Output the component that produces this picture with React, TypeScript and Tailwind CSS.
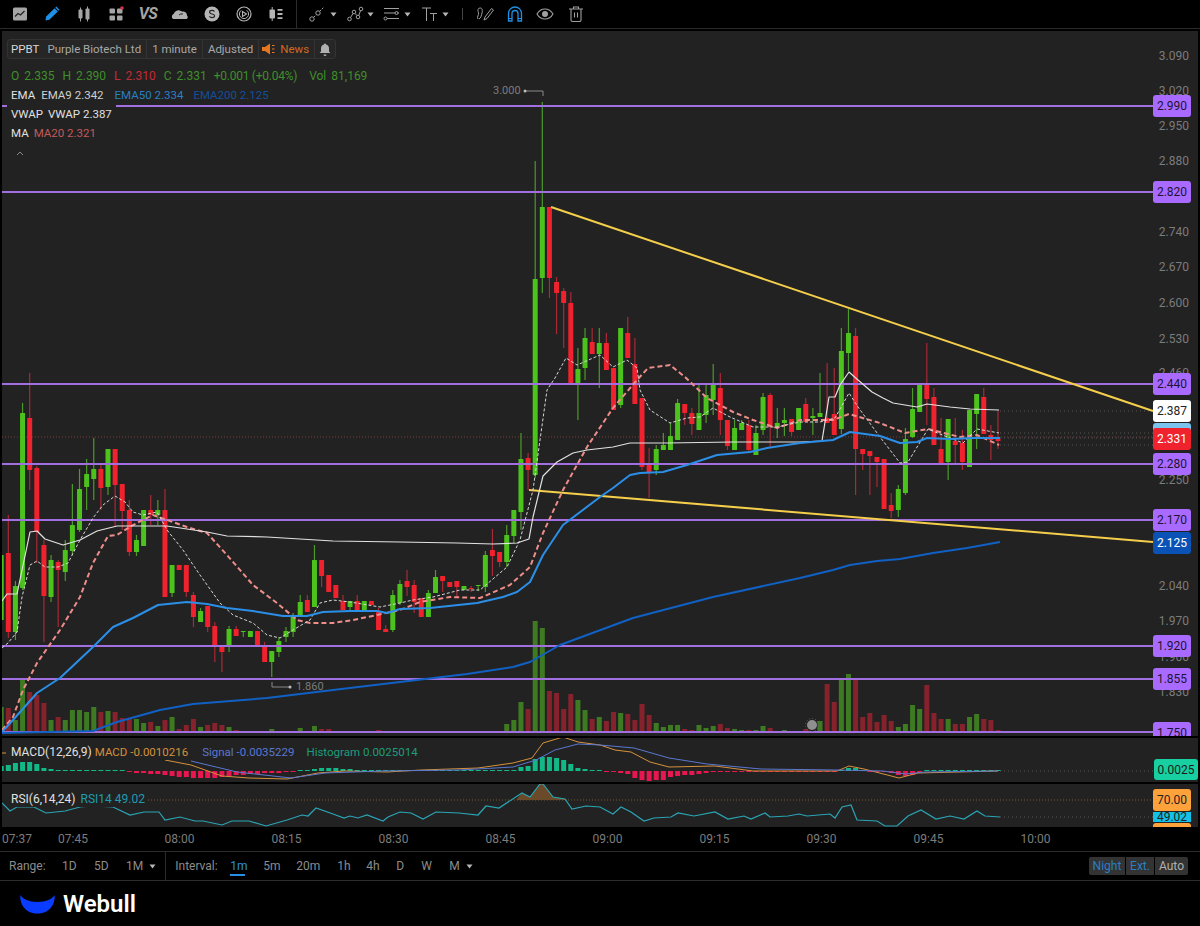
import React from "react";

// [up, bodyTop, bodyBottom, high, low] in page pixels, index 0 is the cut off candle at the left edge
type Candle = [number, number, number, number, number];

const candles: Candle[] = [
  [1,555,620,548,630],[0,553,632,515,638],[1,586,632,581,640],[1,413,588,403,590],[0,418,470,373,490],
  [0,468,532,466,563],[0,545,596,540,642],[1,560,597,555,602],[0,562,570,560,627],[1,550,572,540,581],
  [1,525,551,484,555],[1,489,530,469,532],[1,474,487,459,510],[1,469,479,438,500],[0,469,488,465,510],
  [1,449,487,449,495],[0,449,485,449,527],[0,484,511,484,530],[0,510,552,500,556],[1,540,552,535,556],
  [1,510,546,510,546],[0,510,515,495,525],[1,510,515,500,525],[0,510,597,489,597],[1,565,593,565,597],
  [0,565,570,565,570],[0,565,592,565,597],[0,595,617,592,627],[1,611,622,608,622],[0,606,627,606,632],
  [0,626,647,622,662],[0,647,652,647,672],[1,629,646,626,652],[0,629,636,626,636],[1,631,632,631,637],
  [1,631,637,631,637],[0,631,645,631,645],[0,646,662,642,662],[1,651,662,651,677],[1,641,652,637,657],
  [1,631,637,627,642],[1,617,632,613,637],[1,602,616,595,616],[0,600,612,595,612],[1,560,607,545,607],
  [0,560,576,560,587],[0,575,592,575,592],[0,585,598,585,598],[0,601,610,595,610],[1,601,607,601,610],
  [0,601,610,595,610],[1,601,610,601,610],[0,601,605,601,605],[0,612,630,608,630],[0,629,632,625,632],
  [1,595,630,590,632],[1,584,603,580,605],[0,581,587,570,596],[0,585,602,580,613],[0,598,617,598,617],
  [1,593,617,590,617],[1,577,593,570,593],[0,576,581,576,592],[0,582,587,582,587],[0,581,587,581,597],
  [1,586,590,586,590],[0,588,589,586,592],[1,585,586,585,591],[1,555,587,551,592],[0,550,556,529,576],
  [0,552,562,552,567],[1,535,562,525,567],[1,510,536,510,543],[1,459,512,433,530],[0,458,470,453,490],
  [1,279,475,161,478],[1,207,278,102,293],[0,207,278,207,298],[0,282,293,277,334],[0,291,303,288,348],
  [0,303,383,292,383],[1,369,383,348,420],[1,338,368,328,380],[0,342,354,328,354],[1,343,354,328,388],
  [0,343,370,333,370],[0,368,410,368,410],[1,328,405,328,408],[0,333,358,317,358],[0,364,404,338,404],
  [0,398,467,398,470],[0,465,472,448,498],[1,449,470,445,475],[1,445,450,433,450],[1,436,450,423,450],
  [1,403,440,399,440],[0,404,413,404,425],[0,413,424,408,435],[1,413,430,385,430],[1,395,415,385,423],
  [1,385,400,364,415],[0,388,420,373,435],[0,420,446,420,450],[1,428,450,420,450],[1,423,430,420,430],
  [0,425,450,420,453],[1,433,455,425,455],[1,397,430,393,435],[0,395,427,393,447],[1,423,428,408,438],
  [1,420,423,408,436],[0,419,432,419,436],[1,408,430,408,430],[0,404,422,398,422],[1,416,418,408,435],
  [1,413,417,373,417],[0,418,423,363,423],[0,414,435,368,435],[1,351,429,328,434],[1,333,353,309,371],
  [0,336,449,328,495],[0,449,454,449,470],[0,451,456,451,495],[0,457,462,457,487],[0,459,509,459,509],
  [0,505,511,493,518],[1,489,510,485,517],[1,439,493,428,495],[1,409,437,388,438],[1,385,412,385,412],
  [0,385,399,343,425],[0,397,445,388,445],[0,449,463,418,463],[1,419,462,419,480],[0,441,445,418,463],
  [0,443,462,430,470],[1,410,467,410,467],[1,394,414,394,449],[0,397,434,388,434],[0,435,440,425,460],
  [0,439,441,410,449],
];

// one height per candle, split into the three stretches of the session
const earlyVolumes = [25,24,12,52,40,37,29,12,15,12,22,22,20,25,20,21,20,14,13,13,9,10,6,12,15,3,7,13,5,7,9,7,5];
const quietVolumes = [2,1,1,1,1,3,1,1,1,4,1,6,3,3,1,1,1,1,1,1,2,1,1,1,1,1,1,1,1,1,1,1,1,1,1,1,1,1];
const lateVolumes = [
  8,12,30,23,111,104,41,39,23,38,32,22,13,15,11,20,19,18,12,28,17,9,5,7,7,3,2,7,4,6,8,4,3,2,2,2,6,4,1,2,1,1,3,1,
  11,48,30,52,58,52,15,19,10,17,11,5,8,27,23,47,19,13,13,8,8,15,18,13,12,2,
];
const volumes = [...earlyVolumes, ...quietVolumes, ...lateVolumes];

const histogram = [
  5,6,8,9,9,7,3,2,1,1,1,1,1,1,1,1,1,1,-1,-2,-2,-3,-3,-4,-5,-6,-6,-7,-7,-7,-7,-6,-5,-4,-4,-3,-3,-2,-2,-2,-1,-1,
  1,1,2,3,3,3,2,2,1,1,1,1,1,1,1,1,1,1,1,1,1,1,1,1,1,1,1,1,1,1,1,4,5,12,14,14,13,11,7,3,2,1,1,
  -1,-1,-2,-3,-7,-9,-10,-9,-9,-6,-5,-4,-4,-3,-2,-1,-1,-1,-1,-1,-1,-1,-1,-1,-1,-1,-1,-1,-1,-1,-1,-1,-1,
  1,3,3,1,-1,-1,-1,-2,-4,-5,-4,-2,1,1,1,1,1,1,1,1,1,1,1,
];

const candleX = (i: number) => 1.2 + i * 7.12;

const vwap = "2,601 7,594 17,594 30,532 37,531 45,539 63,545 80,540 97,531 117,526 167,526 207,532 227,536 267,537 300,539 333,541 400,542 457,543 493,544 517,543 529,539 533,517 543,476 557,462 573,453 587,450 613,447 630,443 667,443 733,442 800,442 822,441 829,397 835,397 840,385 849,372 858,380 872,392 883,398 893,403 917,407 927,404 950,407 970,409 999,410";
const ema9 = "2,648 8,643 17,632 22,597 30,565 37,561 45,567 58,567 68,563 80,540 93,518 103,505 115,496 125,502 133,512 143,515 157,512 167,530 183,550 200,575 220,603 233,615 253,623 267,635 280,638 293,630 310,620 320,603 333,600 350,602 380,607 400,603 413,600 433,597 460,590 480,590 507,567 520,540 533,490 547,390 555,378 566,358 577,365 600,355 613,367 627,360 637,368 640,390 650,410 670,423 687,418 700,417 713,408 730,417 753,427 777,427 800,422 820,422 835,418 849,393 858,407 880,437 900,463 908,462 928,429 940,434 963,443 977,429 999,433";
const ma20 = "2,730 13,717 23,690 37,663 60,630 80,597 93,563 108,536 117,535 133,525 153,515 167,520 187,527 207,533 227,555 253,585 277,603 297,620 310,623 333,623 353,620 377,615 400,610 420,602 450,597 480,598 510,585 530,567 543,533 563,490 587,447 613,408 637,380 648,368 670,365 685,377 707,398 733,412 753,420 777,428 800,420 833,420 849,414 880,423 905,433 928,429 960,437 977,435 999,445";
const ema50 = "2,732 13,720 37,693 60,678 93,647 113,627 133,618 158,605 187,602 207,604 227,608 253,611 283,616 307,616 323,612 350,611 377,611 387,613 400,609 430,608 477,603 503,597 517,592 530,582 543,555 563,525 600,497 613,488 630,475 640,473 663,472 687,465 717,455 750,452 767,448 800,443 833,440 850,432 880,436 900,443 917,442 927,438 950,439 973,438 1000,438";
const ema200 = "2,733 93,731 117,722 160,710 193,704 267,698 333,690 400,682 467,674 513,667 530,662 560,645 633,618 713,597 800,578 833,570 850,565 877,561 900,559 933,553 967,548 1000,542";
const macdOrange = "165,760 191,765 222,776 249,778 287,779 318,773 344,771 387,772 421,770 478,768 513,763 532,758 543,743 563,737 578,742 600,745 615,750 631,752 650,762 669,767 715,766 753,771 837,771 849,766 864,769 899,778 918,773 998,771";
const macdBlue = "191,761 237,772 291,778 325,773 383,771 459,770 513,767 536,760 555,750 578,744 600,745 634,748 669,758 707,764 761,769 837,770 883,771 906,774 925,772 998,771";
const rsi = "2,803 10,811 17,807 34,807 46,813 65,811 80,807 92,806 113,807 130,815 144,812 159,812 165,820 180,817 195,821 203,821 222,825 232,821 249,821 266,826 287,820 302,815 308,816 316,808 333,814 344,818 350,816 358,818 367,815 383,821 388,817 400,812 411,813 423,819 436,812 459,813 478,815 486,806 499,808 522,793 530,797 540,784 543,784 553,797 565,799 572,809 586,806 600,807 613,814 621,807 631,812 644,821 654,818 671,817 678,813 694,816 715,812 728,819 744,816 751,819 765,813 770,817 788,816 799,814 807,816 830,814 835,818 842,807 851,805 857,820 877,821 885,826 897,826 908,816 921,810 936,819 950,816 964,819 977,811 985,816 1000,817";

const priceLabels: [string, number][] = [
  ["3.090", 56], ["3.020", 91], ["2.950", 126], ["2.880", 161], ["2.740", 232], ["2.670", 267],
  ["2.600", 303], ["2.530", 339], ["2.460", 373], ["2.250", 480], ["2.040", 586], ["1.970", 621],
  ["1.900", 657], ["1.830", 692],
];

const levels: [string, number][] = [
  ["2.990", 106], ["2.820", 192], ["2.440", 384], ["2.280", 464], ["2.170", 520], ["1.920", 646], ["1.855", 679], ["1.750", 732],
];

const times = ["08:00", "08:15", "08:30", "08:45", "09:00", "09:15", "09:30", "09:45", "10:00"];

function Caret() {
  return (
    <svg width="7" height="5" viewBox="0 0 7 5" className="shrink-0">
      <path d="M0.5 0.5h6L3.5 4.5z" fill="#b5b5b5" />
    </svg>
  );
}

function ToolIcon({ children, className }: { children: React.ReactNode; className?: string }) {
  return (
    <svg width="18" height="18" viewBox="0 0 18 18" fill="none" className={className}>
      {children}
    </svg>
  );
}

const leftTools = [
  <ToolIcon key="chart">
    <rect x="2" y="2.5" width="14" height="13" rx="1.5" fill="#a5a5a5" />
    <path d="M4 11.5l3-3 2.5 1.5 4-4" stroke="#222" strokeWidth="1.3" />
  </ToolIcon>,
  <ToolIcon key="pencil">
    <path d="M3.2 11.6L11.6 3.2l3.2 3.2-8.4 8.4-4 .8z" fill="#1e90e6" />
    <path d="M12.8 2l3.2 3.2" stroke="#1e90e6" strokeWidth="1.6" />
  </ToolIcon>,
  <ToolIcon key="candles">
    <rect x="3.5" y="4.5" width="4" height="9" rx="1" fill="#a5a5a5" />
    <rect x="10.5" y="3.5" width="4" height="11" rx="1" fill="#a5a5a5" />
    <path d="M5.5 2.5v14M12.5 1.5v15" stroke="#a5a5a5" strokeWidth="1" />
  </ToolIcon>,
  <ToolIcon key="grid">
    <rect x="2.5" y="3.5" width="5.5" height="5" rx="1" fill="#a5a5a5" />
    <rect x="10" y="3.5" width="5.5" height="5" rx="1" fill="#a5a5a5" />
    <rect x="2.5" y="10.5" width="5.5" height="5" rx="1" fill="#a5a5a5" />
    <rect x="10" y="10.5" width="5.5" height="5" rx="1" fill="#a5a5a5" />
    <circle cx="15" cy="3" r="1.8" fill="#d8324a" />
  </ToolIcon>,
  <span key="vs" className="text-[16px] font-bold italic leading-none tracking-[-0.5px] text-[#a5a5a5]">VS</span>,
  <ToolIcon key="cloud">
    <path d="M2 14a3 3 0 0 1 .8-5.2A5 5 0 0 1 11 6.6 3.8 3.8 0 0 1 16 10.4 2.4 2.4 0 0 1 15.5 14z" fill="#b0b0b0" />
    <path d="M8 10a4 4 0 0 1 4-1" stroke="#222" strokeWidth="1" />
  </ToolIcon>,
  <ToolIcon key="coin">
    <circle cx="9" cy="9" r="7.5" fill="#b5b5b5" />
    <path d="M11.5 6.5C10.8 5.6 9.8 5.4 9 5.4c-1.4 0-2.4.8-2.4 1.8 0 2.4 5 1.2 5 3.6 0 1-1 1.8-2.6 1.8-1 0-2-.4-2.6-1.2" stroke="#222" strokeWidth="1.2" />
  </ToolIcon>,
  <ToolIcon key="play">
    <circle cx="9" cy="9" r="7" stroke="#b5b5b5" strokeWidth="1.2" />
    <circle cx="9" cy="9" r="4.6" stroke="#b5b5b5" strokeWidth="1" strokeDasharray="18 6" />
    <path d="M7.5 6.5l4 2.5-4 2.5z" stroke="#b5b5b5" strokeWidth="1.1" />
  </ToolIcon>,
  <ToolIcon key="bars">
    <rect x="2.5" y="4.5" width="5.5" height="9" rx="1" fill="#b5b5b5" />
    <path d="M5.2 2v14" stroke="#b5b5b5" />
    <path d="M10.5 4.8h5M10.5 9h5M10.5 13.2h5" stroke="#b5b5b5" strokeWidth="1.8" />
  </ToolIcon>,
];

function Toolbar() {
  return (
    <div className="flex h-[28px] items-center pl-[4px] text-[#b5b5b5]">
      {leftTools.map((icon, i) => (
        <div key={i} className="flex w-[32px] items-center justify-center">
          {icon}
        </div>
      ))}
      <div className="ml-[4px] h-[28px] w-px bg-[#2c2c2c]" />
      <div className="ml-[11px] flex items-center gap-[4px]">
        <ToolIcon>
          <circle cx="4" cy="14" r="2.200" stroke="#a0a0a0" />
          <circle cx="10" cy="8" r="2.200" stroke="#a0a0a0" />
          <path d="M5.600 12.400l2.800-2.800M11.600 6.400L16 2" stroke="#a0a0a0" strokeDasharray="2 1" />
        </ToolIcon>
        <Caret />
      </div>
      <div className="ml-[9px] flex items-center gap-[3px]">
        <ToolIcon>
          <circle cx="3.500" cy="14" r="1.800" stroke="#a0a0a0" />
          <circle cx="8" cy="7" r="1.800" stroke="#a0a0a0" />
          <circle cx="12" cy="12" r="1.800" stroke="#a0a0a0" />
          <circle cx="15" cy="4" r="1.800" stroke="#a0a0a0" />
          <path d="M4.500 12.500L7 8.500M9 8.500l2 2M12.800 10.300L14.500 5.700" stroke="#a0a0a0" />
        </ToolIcon>
        <Caret />
      </div>
      <div className="ml-[9px] flex items-center gap-[3px]">
        <ToolIcon>
          <path d="M1 3.500h15M1 8h15M4 13.500h12" stroke="#a0a0a0" strokeWidth="1" />
          <circle cx="13.500" cy="8" r="1.500" fill="#0a0a0a" stroke="#a0a0a0" />
          <circle cx="2.500" cy="13.500" r="1.500" stroke="#a0a0a0" />
        </ToolIcon>
        <Caret />
      </div>
      <div className="ml-[10px] flex items-center gap-[3px]">
        <ToolIcon>
          <path d="M1 3h9M5.500 3v13M9 8.500h7M12.500 8.500V16" stroke="#a0a0a0" />
        </ToolIcon>
        <Caret />
      </div>
      <div className="ml-[13px] h-[12px] w-px bg-[#444]" />
      <div className="ml-[13px]">
        <ToolIcon>
          <path d="M2 14c-1.500-2 1-4 .5-6S1 3.500 4 3c2.500-.4 2.500 3 2 5s-1 5-3 6" stroke="#a0a0a0" />
          <path d="M8 15l1-3 6.500-8.500 2 1.500-6.500 8.500z" stroke="#a0a0a0" />
        </ToolIcon>
      </div>
      <div className="ml-[12px]">
        <ToolIcon>
          <path d="M2.500 16V8.500a6.500 6.500 0 0 1 13 0V16h-3.500V8.500a3 3 0 0 0-6 0V16z" stroke="#1e90e6" strokeWidth="1.300" />
          <path d="M2.500 13.500H6M12 13.500h3.500" stroke="#1e90e6" strokeWidth="1" />
        </ToolIcon>
      </div>
      <div className="ml-[12px]">
        <ToolIcon>
          <path d="M1 9c2-3.500 5-5 8-5s6 1.500 8 5c-2 3.500-5 5-8 5s-6-1.500-8-5z" stroke="#a0a0a0" strokeWidth="1.100" />
          <circle cx="9" cy="9" r="3" fill="#a0a0a0" />
        </ToolIcon>
      </div>
      <div className="ml-[13px]">
        <ToolIcon>
          <path d="M2 4h14M6.500 3.500V2h5v1.500M4 4.500V15a1.500 1.500 0 0 0 1.500 1.500h7A1.500 1.500 0 0 0 14 15V4.500M7.500 7.500v5M10.500 7.500v5" stroke="#a0a0a0" strokeWidth="1.100" />
        </ToolIcon>
      </div>
    </div>
  );
}

function InfoBar() {
  return (
    <div className="flex h-[20px] w-fit items-center rounded-[3px] border border-[#333] bg-[#262626] text-[11.5px] text-[#a8a8a8]">
      <div className="flex h-full items-center gap-[8px] pl-[3px] pr-[5px]">
        <span className="text-[#d8d8d8]">PPBT</span>
        <span>Purple Biotech Ltd</span>
      </div>
      <div className="flex h-full items-center border-l border-[#333] px-[5px]">1 minute</div>
      <div className="flex h-full items-center border-l border-[#333] px-[5px]">Adjusted</div>
      <div className="flex h-full items-center gap-[5px] border-l border-[#333] pl-[3px] pr-[5px] text-[#d06a20]">
        <svg width="13" height="12" viewBox="0 0 13 12">
          <path d="M0 4h3l5-3.500v11L3 8H0z" fill="#e8761e" />
          <path d="M10 2.500h2.500M10 6h2.500M10 9.500h2.500" stroke="#e8761e" strokeWidth="1.200" />
        </svg>
        <span>News</span>
      </div>
      <div className="flex h-full items-center border-l border-[#333] px-[4px]">
        <svg width="12" height="13" viewBox="0 0 12 13">
          <path d="M6 0.500a1 1 0 0 1 1 1c2 .500 3 2 3 4v3l1.500 1.500H.500L2 8.500v-3c0-2 1-3.500 3-4a1 1 0 0 1 1-1zM4.500 11.500h3a1.500 1.500 0 0 1-3 0z" fill="#b0b0b0" />
        </svg>
      </div>
    </div>
  );
}

function Legend() {
  return (
    <div className="absolute left-[5px] top-[8px] flex flex-col items-start text-[12px] leading-[19px]">
      <InfoBar />
      <div className="mt-[8px] flex pl-[4px] text-[#3f8f2a]">
        <span>O</span>
        <span className="ml-[5px]">2.335</span>
        <span className="ml-[8px]">H</span>
        <span className="ml-[5px]">2.390</span>
        <span className="ml-[8px] text-[#c42a35]">L</span>
        <span className="ml-[5px] text-[#c42a35]">2.310</span>
        <span className="ml-[8px]">C</span>
        <span className="ml-[5px]">2.331</span>
        <span className="ml-[7px] tracking-[-0.25px]">+0.001 (+0.04%)</span>
        <span className="ml-[12px]">Vol</span>
        <span className="ml-[5px]">81,169</span>
      </div>
      <div className="flex pl-[4px] text-[11.5px]">
        <span className="text-[#e0e0e0]">EMA</span>
        <span className="ml-[6px] text-[#d0d0d0]">EMA9 2.342</span>
        <span className="ml-[11px] text-[#2a7fc4]">EMA50 2.334</span>
        <span className="ml-[10px] text-[#134f99]">EMA200 2.125</span>
      </div>
      <div className="flex bg-[#222] px-[4px] text-[11.5px]">
        <span className="text-[#e0e0e0]">VWAP</span>
        <span className="ml-[5px] text-[#e0e0e0]">VWAP 2.387</span>
      </div>
      <div className="flex pl-[4px] text-[11.5px]">
        <span className="text-[#e0e0e0]">MA</span>
        <span className="ml-[5px] text-[#c25a5a]">MA20 2.321</span>
      </div>
      <svg width="8" height="5" viewBox="0 0 8 5" className="ml-[9px] mt-[8px]">
        <path d="M1 4l3-3 3 3" fill="none" stroke="#888" />
      </svg>
    </div>
  );
}

function Tag({ y, bg, text, label, h = 22 }: { y: number; bg: string; text: string; label: string; h?: number }) {
  return (
    <div
      className={`absolute right-[7px] flex w-[38px] items-center justify-center rounded-[3px] text-[12px] ${bg} ${text}`}
      style={{ top: y - 31 - h / 2, height: h }}
    >
      {label}
    </div>
  );
}

function MainPane() {
  return (
    <div className="relative h-[705px] overflow-hidden bg-[#222]">
      <svg viewBox="2 31 1196 705" className="block h-full w-full">
        {/* prev close and last value guide lines */}
        <path d="M2 437H1153" stroke="#7a3a3a" strokeDasharray="1 2" />
        <path d="M1000 411H1153M1000 433H1153M1000 438H1153M1000 445H1153" stroke="#555" strokeDasharray="1 3" />
        {volumes.map((v, i) => (
          <rect
            key={i}
            x={candleX(i) - 2.5}
            y={732 - v}
            width="5"
            height={v}
            fill={candles[i]?.[0] ? "#3e7a22" : "#85222c"}
          />
        ))}
        {candles.map(([up, top, bottom, high, low], i) => (
          <g key={i}>
            <path
              d={`M${candleX(i)} ${high}V${low}`}
              stroke={up ? "#4c9a2a" : "#a82a36"}
              strokeWidth="1.2"
            />
            <rect
              x={candleX(i) - 2.5}
              y={top}
              width="5"
              height={Math.max(bottom - top, 1)}
              rx="0.5"
              fill={up ? "#4cc21c" : "#f0222e"}
            />
          </g>
        ))}
        {levels.map(([label, y]) => (
          <path key={label} d={`M2 ${y}H1153`} stroke="#a26fe0" strokeWidth="2" />
        ))}
        <path d="M551 207L1153 411M529 490L1153 542" stroke="#f5cf4b" strokeWidth="2" fill="none" />
        <polyline points={ema200} fill="none" stroke="#1160c4" strokeWidth="2" strokeLinejoin="round" />
        <polyline points={ma20} fill="none" stroke="#ee8d8a" strokeWidth="2" strokeDasharray="5 3" />
        <polyline points={ema9} fill="none" stroke="#d8d8d8" strokeWidth="1" strokeDasharray="3 2" />
        <polyline points={vwap} fill="none" stroke="#e2e2e2" strokeWidth="1.2" strokeLinejoin="round" />
        <polyline points={ema50} fill="none" stroke="#2b8fe8" strokeWidth="2" strokeLinejoin="round" />
        <path d="M543 96V91H526" stroke="#8a8a8a" fill="none" />
        <circle cx="525" cy="91" r="1.500" fill="#bbb" />
        <path d="M272 682V687H290" stroke="#8a8a8a" fill="none" />
        <circle cx="290" cy="687" r="1.500" fill="#bbb" />
        <circle cx="812" cy="725" r="5" fill="#8f8f8f" />
        <circle cx="812" cy="725" r="6.500" fill="none" stroke="#666" strokeDasharray="1 2" />
      </svg>

      <Legend />
      <span className="absolute left-[491px] top-[52px] text-[11px] leading-[16px] text-[#7c7c7c]">3.000</span>
      <span className="absolute left-[294px] top-[648px] text-[11px] leading-[16px] text-[#7c7c7c]">1.860</span>

      {priceLabels.map(([label, y]) => (
        <span
          key={label}
          className="absolute right-[9px] text-[12px] leading-[16px] text-[#7c7c7c]"
          style={{ top: y - 31 - 8 }}
        >
          {label}
        </span>
      ))}
      {levels.map(([label, y]) => (
        <Tag key={label} y={y === 732 ? 733 : y} bg="bg-[#a96bff]" text="text-[#1d1333]" label={label} />
      ))}
      <Tag y={411} bg="bg-white" text="text-[#222]" label="2.387" />
      <Tag y={428} bg="bg-[#7cc4f0]" text="text-[#222]" label="" h={10} />
      <Tag y={439} bg="bg-[#f0222e]" text="text-white" label="2.331" />
      <Tag y={543} bg="bg-[#0a52b5]" text="text-white" label="2.125" />
    </div>
  );
}

function MacdPane() {
  return (
    <div className="relative mt-[2px] h-[44px] overflow-hidden bg-[#222]">
      <svg viewBox="2 738 1196 44" className="block h-full w-full">
        <path d="M1000 771H1153" stroke="#555" strokeDasharray="1 3" />
        {histogram.map((v, i) => (
          <rect
            key={i}
            x={candleX(i) - 2.5}
            y={v > 0 ? 771 - v : 771}
            width="5"
            height={Math.abs(v)}
            fill={v > 0 ? "#12b886" : "#e8174f"}
          />
        ))}
        <path d="M2 753H6" stroke="#d6913c" />
        <polyline points={macdOrange} fill="none" stroke="#d6913c" />
        <polyline points={macdBlue} fill="none" stroke="#5a78d0" />
      </svg>
      <div className="absolute left-[9px] top-[6px] flex gap-[3px] bg-[#222] pr-[3px] text-[11.5px] leading-[16px]">
        <span className="text-[12px] text-[#e0e0e0]">MACD(12,26,9)</span>
        <span className="text-[#d6913c]">MACD -0.0010216</span>
        <span className="ml-[11px] text-[#5a78d0]">Signal -0.0035229</span>
        <span className="ml-[9px] text-[#1f9c7c]">Histogram 0.0025014</span>
      </div>
      <div className="absolute right-0 top-[21px] flex h-[21px] w-[44px] items-center justify-center rounded-[3px] bg-[#17cfa0] text-[12px] text-[#1a1a1a]">
        0.0025
      </div>
    </div>
  );
}

function RsiPane() {
  return (
    <div className="relative mt-[2px] h-[43px] overflow-hidden bg-[#222]">
      <svg viewBox="2 784 1196 43" className="block h-full w-full">
        <path d="M148 800H1153" stroke="#7a5a30" strokeDasharray="1 2" />
        <path d="M1000 817H1153" stroke="#555" strokeDasharray="1 3" />
        <path d="M516 800L522 793 530 797 540 784 543 784 553 797 565 799 567 800Z" fill="#6b4a2a" />
        <polyline points={rsi} fill="none" stroke="#2aa5b5" strokeWidth="1.2" />
      </svg>
      <div className="absolute left-[9px] top-[7px] flex gap-[5px] bg-[#222] pr-[3px] text-[12px] leading-[16px]">
        <span className="text-[#e0e0e0]">RSI(6,14,24)</span>
        <span className="text-[#1f9cb0]">RSI14 49.02</span>
      </div>
      <div className="absolute right-[7px] top-[5px] flex h-[22px] w-[38px] items-center justify-center rounded-[3px] bg-[#ffa23c] text-[12px] text-[#222]">
        70.00
      </div>
      <div className="absolute right-[7px] top-[28px] flex h-[10px] w-[38px] items-center justify-center bg-[#12c0e8] text-[12px] text-[#222]">
        49.02
      </div>
      <div className="absolute right-[7px] top-[39px] h-[8px] w-[38px] rounded-t-[3px] bg-[#ffa23c]" />
    </div>
  );
}

function TimeAxis() {
  return (
    <div className="flex h-[24px] items-center pl-[2px] text-[12px] text-[#7c7c7c]">
      <span className="w-[30px]">07:37</span>
      <span className="ml-[26px] w-[30px] text-center">07:45</span>
      <div className="ml-[38px] flex">
        {times.map((t) => (
          <span key={t} className="w-[107px] text-center">
            {t}
          </span>
        ))}
      </div>
    </div>
  );
}

function RangeBar() {
  return (
    <div className="flex h-[30px] items-center border-y border-[#2c2c2c] text-[12px] text-[#8c8c8c]">
      <span className="ml-[9px] w-[53px]">Range:</span>
      <span className="w-[32px]">1D</span>
      <span className="w-[32px]">5D</span>
      <span>1M</span>
      <span className="ml-[6px]">
        <Caret />
      </span>
      <div className="ml-[9px] h-full w-px bg-[#2c2c2c]" />
      <span className="ml-[9px] w-[55px]">Interval:</span>
      <span className="relative w-[33px] text-[#2a8fe0]">
        1m
        <span className="absolute left-0 top-[17px] h-[2px] w-[15px] bg-[#2a8fe0]" />
      </span>
      <span className="w-[33px]">5m</span>
      <span className="w-[41px]">20m</span>
      <span className="w-[29px]">1h</span>
      <span className="w-[30px]">4h</span>
      <span className="w-[25px]">D</span>
      <span className="w-[28px]">W</span>
      <span>M</span>
      <span className="ml-[6px]">
        <Caret />
      </span>
      <div className="ml-auto mr-[12px] flex h-[18px] gap-[1px]">
        <span className="flex w-[36px] items-center justify-center rounded-l-[2px] bg-[#333] text-[#2a7fc4]">Night</span>
        <span className="flex w-[28px] items-center justify-center bg-[#333] text-[#2a7fc4]">Ext.</span>
        <span className="flex w-[33px] items-center justify-center rounded-r-[2px] bg-[#333] text-[#b0b0b0]">Auto</span>
      </div>
    </div>
  );
}

function Footer() {
  return (
    <div className="flex h-[45px] items-center pl-[20px]">
      <svg width="35" height="20" viewBox="0 0 35 20">
        <path d="M0.500 1C2.500 5 9 8 17.500 8S32.500 5 34.500 1C35.500 5 33 19.500 17.500 19.500S-0.500 5 0.500 1Z" fill="#0a3cff" />
      </svg>
      <span className="ml-[8px] pt-[1px] text-[24px] font-semibold leading-none text-white">Webull</span>
    </div>
  );
}

export default function App() {
  return (
    <div className="flex h-[926px] w-[1200px] flex-col overflow-hidden bg-black font-['Roboto',sans-serif]">
      <Toolbar />
      <div className="mb-[2px] h-px bg-[#2a2a2a]" />
      <div className="mx-[2px]">
        <MainPane />
        <MacdPane />
        <RsiPane />
      </div>
      <TimeAxis />
      <RangeBar />
      <Footer />
    </div>
  );
}
